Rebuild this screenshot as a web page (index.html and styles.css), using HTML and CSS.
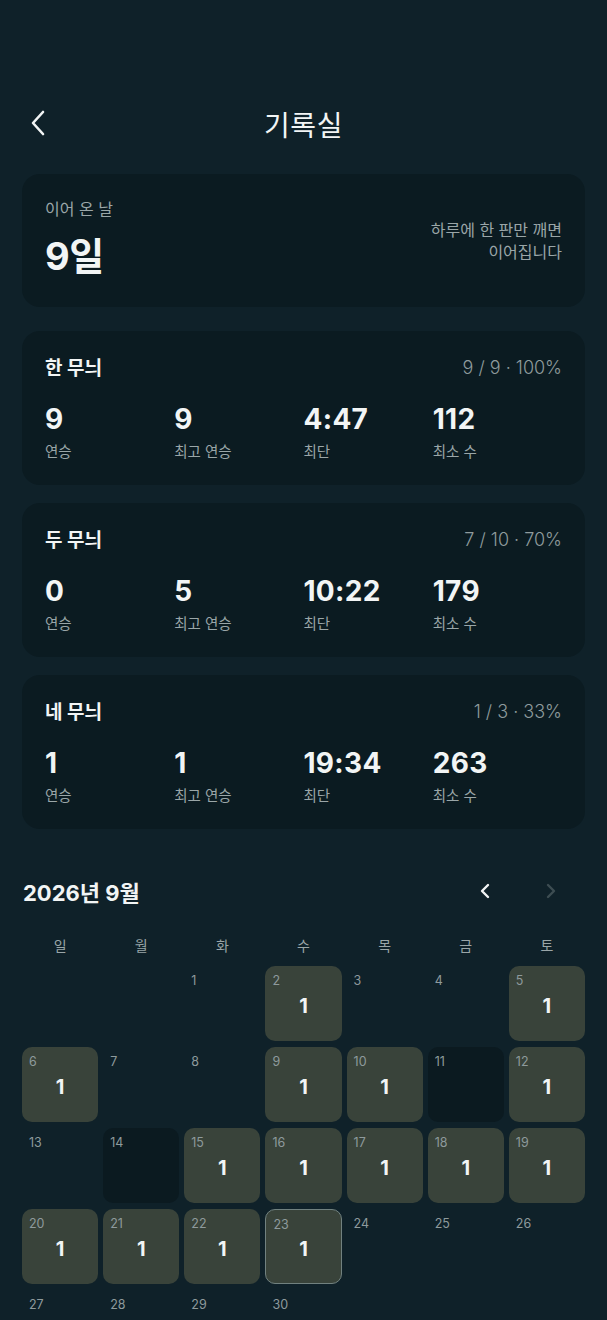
FILE: index.html
```html
<!DOCTYPE html>
<html lang="ko">

<head>
    <meta charset="UTF-8">
    <meta name="viewport" content="width=device-width, initial-scale=1.0">
    <title>기록실</title>
    <link rel="stylesheet" href="styles.css">
</head>

<body>
    <header class="topbar">
        <button class="back-btn" aria-label="뒤로">
            <svg width="16" height="26" viewBox="0 0 16 26"><path d="M13 2 L3 13 L13 24" fill="none" stroke="#f2f5f5" stroke-width="2.6" stroke-linecap="round" stroke-linejoin="round"/></svg>
        </button>
        <h1>기록실</h1>
    </header>

    <main class="page">
        <section class="card streak-card">
            <div>
                <p class="streak-label">이어 온 날</p>
                <p class="streak-value">9일</p>
            </div>
            <p class="streak-hint">하루에 한 판만 깨면<br>이어집니다</p>
        </section>

        <section class="card stat-card">
            <div class="stat-head">
                <h2>한 무늬</h2>
                <span class="stat-rate">9 / 9 · 100%</span>
            </div>
            <div class="stat-grid">
                <div><b>9</b><span>연승</span></div>
                <div><b>9</b><span>최고 연승</span></div>
                <div><b>4:47</b><span>최단</span></div>
                <div><b>112</b><span>최소 수</span></div>
            </div>
        </section>

        <section class="card stat-card">
            <div class="stat-head">
                <h2>두 무늬</h2>
                <span class="stat-rate">7 / 10 · 70%</span>
            </div>
            <div class="stat-grid">
                <div><b>0</b><span>연승</span></div>
                <div><b>5</b><span>최고 연승</span></div>
                <div><b>10:22</b><span>최단</span></div>
                <div><b>179</b><span>최소 수</span></div>
            </div>
        </section>

        <section class="card stat-card">
            <div class="stat-head">
                <h2>네 무늬</h2>
                <span class="stat-rate">1 / 3 · 33%</span>
            </div>
            <div class="stat-grid">
                <div><b>1</b><span>연승</span></div>
                <div><b>1</b><span>최고 연승</span></div>
                <div><b>19:34</b><span>최단</span></div>
                <div><b>263</b><span>최소 수</span></div>
            </div>
        </section>

        <section class="calendar">
            <div class="cal-head">
                <h2>2026년 9월</h2>
                <div class="cal-nav">
                    <svg width="12" height="16" viewBox="0 0 12 16"><path d="M9 2 L3 8 L9 14" fill="none" stroke="#f2f5f5" stroke-width="2.4" stroke-linecap="round" stroke-linejoin="round"/></svg>
                    <svg width="12" height="16" viewBox="0 0 12 16"><path d="M3 2 L9 8 L3 14" fill="none" stroke="#3d4d52" stroke-width="2.4" stroke-linecap="round" stroke-linejoin="round"/></svg>
                </div>
            </div>
            <div class="weekdays">
                <span>일</span><span>월</span><span>화</span><span>수</span><span>목</span><span>금</span><span>토</span>
            </div>
            <div class="days">
                <div class="day"></div>
                <div class="day"></div>
                <div class="day"><span class="num">1</span></div>
                <div class="day done"><span class="num">2</span><b>1</b></div>
                <div class="day"><span class="num">3</span></div>
                <div class="day"><span class="num">4</span></div>
                <div class="day done"><span class="num">5</span><b>1</b></div>

                <div class="day done"><span class="num">6</span><b>1</b></div>
                <div class="day"><span class="num">7</span></div>
                <div class="day"><span class="num">8</span></div>
                <div class="day done"><span class="num">9</span><b>1</b></div>
                <div class="day done"><span class="num">10</span><b>1</b></div>
                <div class="day missed"><span class="num">11</span></div>
                <div class="day done"><span class="num">12</span><b>1</b></div>

                <div class="day"><span class="num">13</span></div>
                <div class="day missed"><span class="num">14</span></div>
                <div class="day done"><span class="num">15</span><b>1</b></div>
                <div class="day done"><span class="num">16</span><b>1</b></div>
                <div class="day done"><span class="num">17</span><b>1</b></div>
                <div class="day done"><span class="num">18</span><b>1</b></div>
                <div class="day done"><span class="num">19</span><b>1</b></div>

                <div class="day done"><span class="num">20</span><b>1</b></div>
                <div class="day done"><span class="num">21</span><b>1</b></div>
                <div class="day done"><span class="num">22</span><b>1</b></div>
                <div class="day done today"><span class="num">23</span><b>1</b></div>
                <div class="day"><span class="num">24</span></div>
                <div class="day"><span class="num">25</span></div>
                <div class="day"><span class="num">26</span></div>

                <div class="day"><span class="num">27</span></div>
                <div class="day"><span class="num">28</span></div>
                <div class="day"><span class="num">29</span></div>
                <div class="day"><span class="num">30</span></div>
            </div>
        </section>
    </main>
</body>

</html>
```

FILE: styles.css
```css
body {
    margin: 0;
    padding: 0;
    background-color: #0f2129;
    color: #f2f5f5;
    font-family: Inter, "Noto Sans CJK KR", sans-serif;
}

p, h1, h2 {
    margin: 0;
}

.topbar {
    position: relative;
    height: 64px;
    margin-top: 92px;
    display: flex;
    align-items: center;
    justify-content: center;
}

.topbar h1 {
    font-size: 28px;
    font-weight: 400;
    letter-spacing: 0.5px;
}

.back-btn {
    position: absolute;
    left: 28px;
    top: 18px;
    background: none;
    border: none;
    padding: 0;
    width: 20px;
    height: 28px;
}

.page {
    padding: 18px 22px 0;
}

.card {
    background-color: #0b1b21;
    border-radius: 18px;
    padding: 0 23px;
}

.streak-card {
    height: 133px;
    display: flex;
    align-items: center;
    justify-content: space-between;
    margin-bottom: 24px;
}

.streak-label {
    font-size: 16px;
    color: #9aa6a8;
    margin-top: -4px;
}

.streak-value {
    font-size: 38px;
    font-weight: 700;
    margin-top: 6px;
    letter-spacing: -0.5px;
}

.streak-hint {
    font-size: 16px;
    color: #9aa6a8;
    text-align: right;
    line-height: 22px;
    margin-top: 0;
}

.stat-card {
    height: 154px;
    padding-top: 22px;
    box-sizing: border-box;
    margin-bottom: 18px;
}

.stat-head {
    display: flex;
    justify-content: space-between;
    align-items: center;
    height: 28px;
}

.stat-head h2 {
    font-size: 19px;
    font-weight: 700;
    margin-top: -2px;
}

.stat-rate {
    font-size: 18px;
    color: #8f9b9d;
    font-weight: 300;
}

.stat-grid {
    display: grid;
    grid-template-columns: repeat(4, 1fr);
    margin-top: 22px;
}

.stat-grid div {
    display: flex;
    flex-direction: column;
}

.stat-grid b {
    font-size: 28px;
    font-weight: 700;
    line-height: 32px;
    letter-spacing: 0.3px;
}

.stat-grid span {
    font-size: 14.5px;
    color: #9aa6a8;
    margin-top: 5px;
}

.calendar {
    padding-top: 26px;
}

.cal-head {
    display: flex;
    justify-content: space-between;
    align-items: center;
    height: 36px;
}

.cal-head h2 {
    font-size: 22px;
    font-weight: 700;
    padding-left: 1px;
}

.cal-nav {
    display: flex;
    gap: 54px;
    padding-right: 28px;
}

.weekdays {
    display: grid;
    grid-template-columns: repeat(7, 1fr);
    gap: 5px;
    margin-top: 25px;
    height: 22px;
    align-items: center;
}

.weekdays span {
    text-align: center;
    font-size: 14px;
    color: #9aa6a8;
}

.days {
    display: grid;
    grid-template-columns: repeat(7, 1fr);
    gap: 6px 5px;
    margin-top: 10px;
}

.day {
    position: relative;
    height: 75px;
    border-radius: 10px;
    box-sizing: border-box;
    display: flex;
    align-items: center;
    justify-content: center;
}

.day .num {
    position: absolute;
    left: 7px;
    top: 7px;
    font-size: 12.5px;
    color: #8e9a9c;
}

.day b {
    font-size: 20px;
    font-weight: 700;
    margin-top: 5px;
}

.day.done {
    background-color: #39433a;
}

.day.missed {
    background-color: #0b1a20;
}

.day.today {
    border: 1.5px solid #71817f;
}
```
